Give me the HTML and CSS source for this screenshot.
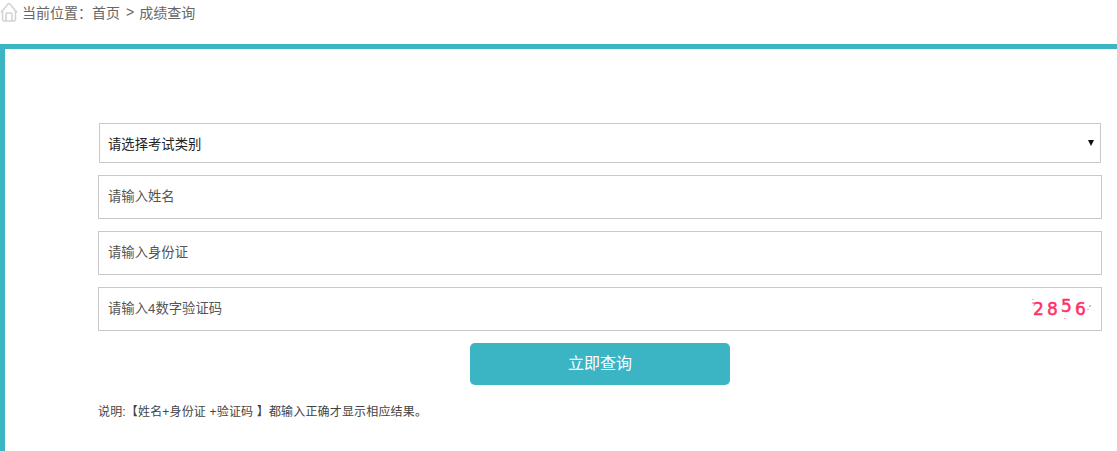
FILE: index.html
```html
<!DOCTYPE html>
<html lang="zh-CN">
<head>
  <meta charset="UTF-8">
  <title>成绩查询</title>
  <link rel="stylesheet" href="styles.css">
</head>
<body>
  <div class="crumb">
    <svg class="home" width="18" height="20" viewBox="0 0 18 20">
      <path d="M1 10.5 L8 2 Q9 1 10 2 L17 10.5 M2.500 9 V17 Q2.500 19 4.500 19 H13.500 Q15.500 19 15.500 17 V9 M6 19 V12.500 Q6 11 7.500 11 H10.500 Q12 11 12 12.500 V19" fill="none" stroke="#d2d2d2" stroke-width="1.5"/>
    </svg>
    <span>当前位置：</span><a href="#">首页</a><span class="sep">&gt;</span><a href="#">成绩查询</a>
  </div>

  <div class="main">
    <form class="query">
      <div class="type-box">
        <select class="type">
          <option>请选择考试类别</option>
        </select>
      </div>
      <input type="text" placeholder="请输入姓名">
      <input type="text" placeholder="请输入身份证">
      <div class="code-row">
        <input type="text" placeholder="请输入4数字验证码">
        <div class="captcha">
          <svg class="noise" width="60" height="24" viewBox="0 0 60 24">
            <path d="M1 2v1M1 5v2M2 8v1M58.500 8l-1 2M56 12v1M30 12v1M33 21v1" stroke="#ff5a86" stroke-width="1"/>
          </svg>
          <span>2</span><span>8</span><span class="up">5</span><span>6</span>
        </div>
      </div>
      <button type="button">立即查询</button>
      <p class="note">说明:【姓名+身份证 +验证码 】都输入正确才显示相应结果。</p>
    </form>
  </div>
</body>
</html>
```

FILE: styles.css
```css
* {
  box-sizing: border-box;
}

body {
  margin: 0;
  background-color: white;
  font-family: "Liberation Sans", "Noto Sans CJK SC", sans-serif;
  font-size: 14px;
  color: #333;
}

.crumb {
  display: flex;
  align-items: center;
  height: 44px;
  padding: 0 0 18px 0;
  color: #666;
}

.crumb span:first-of-type {
  margin-top: -3px;
}

.crumb a,
.crumb .sep {
  margin-top: -3px;
}

.crumb .home {
  margin: -2px 4px 0 0;
}

.crumb a {
  color: #666;
  text-decoration: none;
}

.crumb .sep {
  margin-left: 6px;
  margin-right: 5px;
}

.main {
  height: 407px;
  border-top: 5px solid #3bb4c4;
  border-left: 5px solid #3bb4c4;
  padding: 74px 15px 0 93px;
}

.query {
  display: flex;
  flex-direction: column;
  gap: 12px;
}

.type-box {
  position: relative;
  width: 1002px;
  margin-left: 1px;
}

.type-box::after {
  content: "";
  position: absolute;
  top: 17px;
  right: 7px;
  border-top: 6px solid #111;
  border-left: 3px solid transparent;
  border-right: 3px solid transparent;
}

.type {
  display: block;
  width: 100%;
  height: 40px;
  padding: 2px 8px 0;
  border: 1px solid #c9c9c9;
  border-radius: 0;
  background-color: white;
  appearance: none;
  font-family: inherit;
  font-size: 13.33px;
  color: #222;
}

.query input {
  display: block;
  width: 100%;
  height: 44px;
  padding: 0 9px 2px;
  border: 1px solid #c9c9c9;
  font-family: inherit;
  font-size: 13.33px;
}

.query input::placeholder {
  color: #555;
  opacity: 1;
}

.code-row {
  position: relative;
}

.captcha {
  position: absolute;
  top: 10px;
  right: 10px;
  width: 60px;
  height: 24px;
  display: flex;
  align-items: center;
  gap: 3.2px;
  padding-left: 1px;
  font-family: "DejaVu Sans", sans-serif;
  font-size: 17px;
  color: #ff2f68;
  -webkit-text-stroke: 0.5px #ff2f68;
}

.captcha .noise {
  position: absolute;
  top: 0;
  left: 0;
}

.captcha .up {
  margin-top: -6px;
}

.query button {
  align-self: center;
  width: 260px;
  height: 42px;
  padding-bottom: 6px;
  border: 0;
  border-radius: 5px;
  background-color: #3bb4c4;
  color: white;
  font-family: inherit;
  font-size: 16px;
}

.note {
  margin: 5px 0 0;
  font-size: 12px;
  letter-spacing: 0.17px;
  color: #444;
}
```
